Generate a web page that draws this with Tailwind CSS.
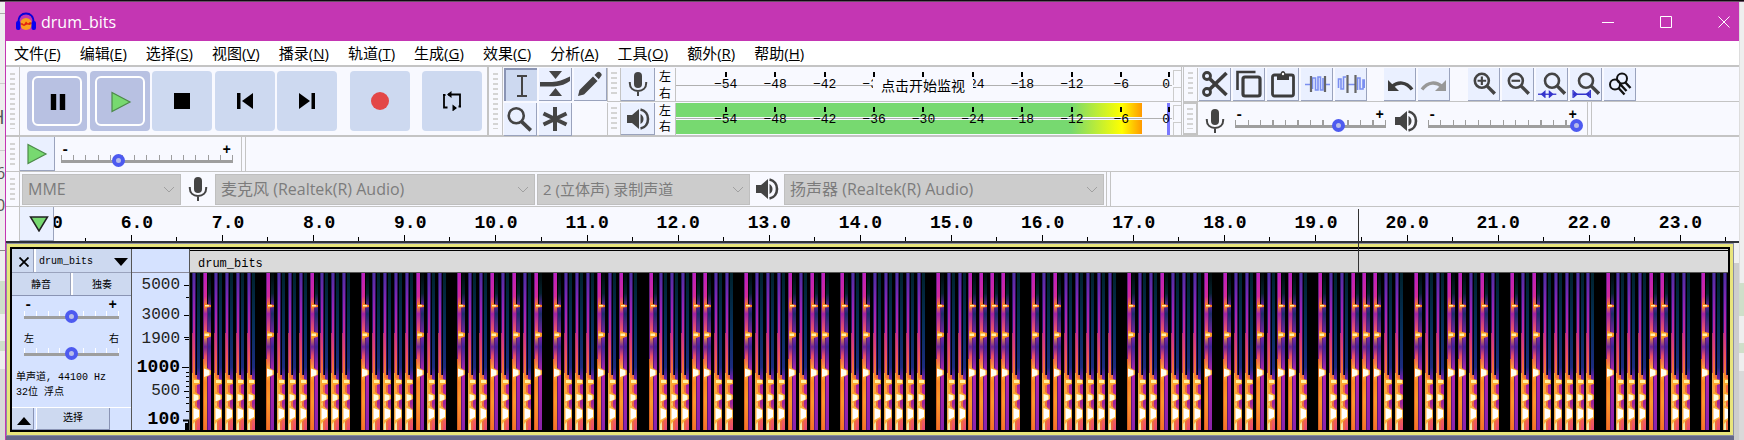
<!DOCTYPE html>
<html lang="zh-CN">
<head>
<meta charset="utf-8">
<title>drum_bits</title>
<script src="https://cdn.jsdelivr.net/npm/@tailwindcss/browser@4"></script>
</head>
<body class="bg-[#eeeeee] font-['Open_Sans','Noto_Sans_CJK_SC',sans-serif] text-black">
<svg class="hidden" aria-hidden="true">
  <symbol id="mic" viewBox="0 0 24 24"><rect x="8" y="0" width="8" height="16" rx="4" fill="#444"/><path d="M3.800 10v1c0 5 3.400 8 8.200 8s8.200-3 8.200-8v-1M12 19v5" fill="none" stroke="#444" stroke-width="2"/></symbol>
  <symbol id="speaker" viewBox="0 0 24 24"><path d="M1 8h5l7-6v20l-7-6H1z" fill="#444"/><path d="M14.500 7c4 2 4 8 0 10z" fill="#444"/><path d="M14.500 2.500c10 2 10 17 0 19" fill="none" stroke="#444" stroke-width="2.600"/></symbol>
  <symbol id="lens" viewBox="0 0 26 26"><circle cx="11" cy="10" r="6.500" fill="none" stroke="#444" stroke-width="2.400"/><path d="M16 15l7 7" stroke="#444" stroke-width="3.200"/></symbol>
  <symbol id="play" viewBox="0 0 22 22"><path d="M2 1.500L20 11 2 20.500z" fill="#77d970" stroke="#4c8a49" stroke-width="1.200"/></symbol>
</svg>

<div class="flex min-h-screen flex-col">
  <div class="h-0.5 bg-linear-to-b from-black to-[#9c7a98]"></div>
  <div class="flex flex-1">
    <!-- sliver of the desktop on the left -->
    <div class="flex w-1.5 flex-col overflow-hidden border-r border-[#c436b3] text-[#555]">
      <div class="h-3 border-b border-[#aaa]"></div>
      <div class="h-[70px] border-b border-[#ccc]"></div>
      <div class="flex h-[67px] flex-col justify-center border-b border-[#ccc]"><span class="-ml-2.5 text-xl leading-6">H</span></div>
      <div class="flex h-[100px] flex-col gap-2 border-b border-[#888] pt-2.5 text-base leading-6"><span class="-ml-1">6</span><span class="-ml-1">0</span></div>
      <div class="h-[30px]"></div>
      <div class="h-[33px] bg-[#cfdfc9]"></div>
      <div class="h-[27px]"></div>
      <div class="h-2.5 bg-[#cfdfc9]"></div>
      <div class="h-[18px]"></div>
      <div class="flex-1 bg-[#d9d9d9]"></div>
    </div>

    <div class="flex min-w-0 flex-1 flex-col bg-[#f8f9ff]">
      <header class="flex h-[39px] items-center bg-[#c436b3] pr-0 text-white">
        <svg class="ml-2.5 h-5 w-5" viewBox="0 0 20 20"><circle cx="10" cy="12" r="6" fill="#fb9d1f"/><path d="M4 12l2-1 2 1.500 2-3 2 2 2-1.500 2 1-2 2-3-.5-3 1.500-2-1z" fill="#e3210f"/><path d="M2.500 11C2 4 6 1.500 10 1.500S18 4 17.500 11" fill="none" stroke="#0a00d8" stroke-width="1.800"/><rect x="0" y="9" width="4.500" height="9" rx="2" fill="#0a00f0"/><rect x="15.500" y="9" width="4.500" height="9" rx="2" fill="#0a00f0"/></svg>
        <h1 class="ml-[5px] flex-1 text-base">drum_bits</h1>
        <button aria-label="最小化" class="flex w-[58px] justify-center"><svg class="h-3 w-3" viewBox="0 0 12 12" stroke="#fff"><path d="M0 6.500h12"/></svg></button>
        <button aria-label="最大化" class="flex w-[58px] justify-center"><svg class="h-3 w-3" viewBox="0 0 12 12" stroke="#fff" fill="none"><path d="M.5.5h11v11H.5z"/></svg></button>
        <button aria-label="关闭" class="-mr-3.5 flex w-[58px] justify-center"><svg class="h-3 w-3" viewBox="0 0 12 12" stroke="#fff"><path d="M.5.5l11 11M11.500.5l-11 11"/></svg></button>
      </header>

      <nav class="flex h-[26px] items-center gap-[19px] border-b-2 border-[#c4c4c4] bg-white pl-2 text-[15px] whitespace-nowrap">
        <button>文件(<u>F</u>)</button><button>编辑(<u>E</u>)</button><button>选择(<u>S</u>)</button><button>视图(<u>V</u>)</button><button>播录(<u>N</u>)</button><button>轨道(<u>T</u>)</button><button>生成(<u>G</u>)</button><button>效果(<u>C</u>)</button><button>分析(<u>A</u>)</button><button>工具(<u>O</u>)</button><button>额外(<u>R</u>)</button><button>帮助(<u>H</u>)</button>
      </nav>

      <!-- main tool dock -->
      <div class="flex h-[70px] border-b-2 border-[#c4c4c4]">
        <div class="flex border-r-2 border-[#c4c4c4] pr-[5px]">
          <div class="w-3.5 border-r border-[#c4c4c4] px-1 py-1.5"><div class="h-full bg-[repeating-linear-gradient(to_bottom,#d4d4d4_0_2px,transparent_2px_5px)]"></div></div>
          <div class="flex items-center pl-[7px]">
            <div class="flex w-[310px] justify-between">
              <button aria-label="暂停" class="flex size-[60px] items-center justify-center rounded bg-[#b8c1e2] p-[5px]"><span class="flex size-full items-center justify-center rounded-md border-2 border-white"><svg class="ml-0.5 mt-0.5 size-[18px]" viewBox="0 0 20 20"><path d="M2 1h6v18H2zM12 1h6v18h-6z"/></svg></span></button>
              <button aria-label="播放" class="flex size-[60px] items-center justify-center rounded bg-[#b8c1e2] p-[5px]"><span class="flex size-full items-center justify-center rounded-md border-2 border-white"><svg class="mt-0.5 ml-0.5 size-[22px]"><use href="#play"/></svg></span></button>
              <button aria-label="停止" class="flex size-[60px] items-center justify-center rounded bg-[#cdd9f0]"><span class="size-4 bg-black"></span></button>
              <button aria-label="跳到开头" class="flex size-[60px] items-center justify-center rounded bg-[#cdd9f0]"><svg class="size-[18px]" viewBox="0 0 18 18"><path d="M1 1h3.500v16H1zM17 1v16L6 9z"/></svg></button>
              <button aria-label="跳到结尾" class="flex size-[60px] items-center justify-center rounded bg-[#cdd9f0]"><svg class="size-[18px]" viewBox="0 0 18 18"><path d="M13.500 1H17v16h-3.500zM1 1v16l11-8z"/></svg></button>
            </div>
            <button aria-label="录制" class="ml-[13px] flex size-[60px] items-center justify-center rounded bg-[#cdd9f0]"><span class="size-[18px] rounded-full bg-[#e34747]"></span></button>
            <button aria-label="循环" class="ml-3 flex size-[60px] items-center justify-center rounded bg-[#cdd9f0]"><svg class="size-5" viewBox="0 0 20 20" fill="none" stroke="#000" stroke-width="1.800"><path d="M5.500 16.500H2V4M6 3.500h12V16M14 17H11"/><path d="M1 4h2.500M16.500 15.500H19"/><path d="M9.500 0L5 3.500l4.500 3.500zM10.500 13.500L15 17l-4.500 3.500z" fill="#000" stroke="none"/></svg></button>
          </div>
        </div>

        <div class="flex">
          <div class="w-3.5 border-r border-[#c4c4c4] px-1 py-1.5"><div class="h-full bg-[repeating-linear-gradient(to_bottom,#d4d4d4_0_2px,transparent_2px_5px)]"></div></div>
          <div class="grid grid-cols-3 content-start gap-0.5 pt-px pl-px">
            <button aria-label="选择工具" class="flex size-[33px] items-center justify-center border-t-2 border-l-2 border-[#8a94b4] bg-[#cdd9f0]"><svg class="h-[22px] w-3" viewBox="0 0 12 22" fill="none" stroke="#444" stroke-width="2"><path d="M1 1h10M1 21h10M6 1v20"/></svg></button>
            <button aria-label="包络工具" class="flex size-[33px] items-center justify-center border-r border-b border-[#9aa3bd] bg-[#eaf0ff]"><svg class="size-8" viewBox="0 0 32 32" fill="#444"><path d="M10 3h13l-6.500 8zM10 28h13l-6.500-8z"/><path d="M1 14h12c6-.5 11-2 18-5.500v4.500c-4 3-9 5-16 5.500H1z"/></svg></button>
            <button aria-label="绘制工具" class="flex size-[33px] items-center justify-center border-r border-b border-[#9aa3bd] bg-[#eaf0ff]"><svg class="size-7" viewBox="0 0 28 28" fill="#444"><path d="M2 26l1.500-6L17 6.500l4.500 4.500L8 24.500zM18.500 5l2.500-2.500c1-1 2.500-1 3.500.2 1.500 1.200 1.500 2.500.5 3.500L22.800 9.300z"/></svg></button>
            <button aria-label="缩放工具" class="flex size-[33px] items-center justify-center border-r border-b border-[#9aa3bd] bg-[#eaf0ff]"><svg class="size-7" viewBox="2 0 26 26"><circle cx="11.500" cy="10" r="7" fill="none" stroke="#444" stroke-width="2.400"/><path d="M16.500 15.500l8.500 8" stroke="#444" stroke-width="3.400"/></svg></button>
            <button aria-label="多功能工具" class="flex size-[33px] items-center justify-center border-r border-b border-[#9aa3bd] bg-[#eaf0ff]"><svg class="size-[26px]" viewBox="0 0 26 26" stroke="#444" stroke-width="4"><path d="M13 1v24M1.500 7.500l23 11M24.500 7.500l-23 11"/></svg></button>
          </div>
        </div>

        <!-- level meters -->
        <div class="flex flex-col border-r border-[#c4c4c4]">
          <div class="flex h-[35px] border-b border-[#c4c4c4] pt-px">
            <div class="w-3.5 border-x border-[#c4c4c4] px-[3px] py-1"><div class="h-full bg-[repeating-linear-gradient(to_bottom,#d4d4d4_0_2px,transparent_2px_5px)]"></div></div>
            <button aria-label="录制电平" class="flex w-[34px] items-center justify-center border-r border-b border-[#9aa3bd] bg-[#eaf0ff]"><svg class="size-6"><use href="#mic"/></svg></button>
            <div class="flex w-5 flex-col items-center text-xs leading-[17px]"><span>左</span><span>右</span></div>
            <div class="relative flex w-[497px] flex-col border-l border-[#c4c4c4]">
              <div class="h-[18px] border-b border-[#b0b0b0]"></div>
              <div class="absolute inset-0 flex pl-[25px] font-['Liberation_Mono',monospace] text-[13px] leading-3" data-scale></div>
              <span class="absolute top-[9px] left-[197px] bg-[#f8f9ff] px-2 font-['Noto_Sans_CJK_SC',sans-serif] text-sm leading-4">点击开始监视</span>
            </div>
            <div class="mt-0.5 ml-px flex w-2 flex-col gap-0.5"><div class="h-[15px] border-t border-l border-[#ccc]"></div><div class="flex-1 border-t border-l border-[#ccc]"></div></div>
          </div>
          <div class="flex h-[33px] pt-px">
            <div class="w-3.5 border-x border-[#c4c4c4] px-[3px] py-1"><div class="h-full bg-[repeating-linear-gradient(to_bottom,#d4d4d4_0_2px,transparent_2px_5px)]"></div></div>
            <button aria-label="播放电平" class="flex w-[34px] items-center justify-center border-r border-b border-[#9aa3bd] bg-[#eaf0ff]"><svg class="size-6"><use href="#speaker"/></svg></button>
            <div class="flex w-5 flex-col items-center text-xs leading-4"><span>左</span><span>右</span></div>
            <div class="relative flex w-[497px] flex-col border-l border-[#c4c4c4]">
              <div class="h-3.5 w-[466px] bg-[linear-gradient(to_right,#77d970_0_395px,#ffff00_446px,#ff9900_466px)]"></div>
              <div class="my-px h-px bg-[#b0b0b0]"></div>
              <div class="h-3.5 w-[466px] bg-[linear-gradient(to_right,#77d970_0_395px,#ffff00_446px,#ff9900_466px)]"></div>
              <div class="absolute inset-y-0 right-0.5 w-[3px] bg-[#7a78ff]"></div>
              <div class="absolute inset-0 flex pl-[25px] font-['Liberation_Mono',monospace] text-[13px] leading-3" data-scale></div>
            </div>
            <div class="mt-0.5 ml-px flex w-2 flex-col gap-0.5"><div class="h-[15px] border-t border-l border-[#ccc]"></div><div class="flex-1 border-t border-l border-[#ccc]"></div></div>
          </div>
        </div>

        <!-- edit and mixer bars -->
        <div class="ml-px flex flex-1 flex-col border-l border-[#c4c4c4]">
          <div class="flex h-[35px] border-b border-[#c4c4c4] pt-px">
            <div class="w-3.5 border-r border-[#c4c4c4] px-1 py-1"><div class="h-full bg-[repeating-linear-gradient(to_bottom,#d4d4d4_0_2px,transparent_2px_5px)]"></div></div>
            <div class="flex gap-0.5 pl-px">
              <button aria-label="剪切" class="flex w-8 items-center justify-center border-r border-b border-[#9aa3bd] bg-[#eaf0ff]"><svg class="size-7" viewBox="0 0 28 28" fill="none" stroke="#3c3c3c"><circle cx="6" cy="6" r="3.500" stroke-width="2.800"/><circle cx="6" cy="22" r="3.500" stroke-width="2.800"/><path d="M8.500 8.500L25.500 25" stroke-width="3.600"/><path d="M8.500 19.500L25.500 3" stroke-width="3.600"/></svg></button>
              <button aria-label="复制" class="flex w-8 items-center justify-center border-r border-b border-[#9aa3bd] bg-[#eaf0ff]"><svg class="size-7" viewBox="0 0 28 28" fill="none" stroke="#3c3c3c" stroke-width="2.600"><path d="M2.500 20V2h18"/><rect x="8" y="7" width="17" height="19" rx="2" stroke-width="3.200"/></svg></button>
              <button aria-label="粘贴" class="flex w-8 items-center justify-center border-r border-b border-[#9aa3bd] bg-[#eaf0ff]"><svg class="size-7" viewBox="0 0 28 28"><rect x="3.500" y="5" width="21" height="21" rx="2" fill="none" stroke="#3c3c3c" stroke-width="2.800"/><path d="M8 4h3.500c.5-4 4.500-4 5 0H20v6H8z" fill="#3c3c3c"/><circle cx="14" cy="4" r="1.200" fill="#fff"/></svg></button>
              <button aria-label="修剪" class="flex w-8 items-center justify-center border-r border-b border-[#9aa3bd] bg-[#eaf0ff]"><svg class="h-5 w-7" viewBox="0 0 28 20" fill="none" stroke="#7b8ff0" stroke-width="1.600"><path d="M2 10.500h5M23 10.500h4M9.500 15V4h3v12h2.500V3h2.500v13H20V4"/><path d="M8 2v16M22 2v16" stroke="#666" stroke-width="2.200"/></svg></button>
              <button aria-label="静音选区" class="flex w-8 items-center justify-center border-r border-b border-[#9aa3bd] bg-[#eaf0ff]"><svg class="h-5 w-7" viewBox="0 0 28 20" fill="none" stroke="#7b8ff0" stroke-width="1.600"><path d="M1.500 14V5H4v10h2.500V3H9M11 10.500h7M20.500 16V4H23v11h3V6h1.500v8"/><path d="M10.500 1v18M18.500 1v18" stroke="#666" stroke-width="2.200"/></svg></button>
            </div>
            <div class="flex gap-0.5 pl-[17px]">
              <button aria-label="撤销" class="flex w-8 items-center justify-center border-r border-b border-[#9aa3bd] bg-[#eaf0ff]"><svg class="mt-1 h-4 w-7" viewBox="0 0 28 16"><path d="M6 8.500C12 3.500 20 3.500 26 11.500" fill="none" stroke="#3c3c3c" stroke-width="3.400"/><path d="M2 2v11h11z" fill="#3c3c3c"/></svg></button>
              <button aria-label="重做" class="flex w-8 items-center justify-center border-r border-b border-[#9aa3bd] bg-[#eaf0ff]"><svg class="mt-1 h-4 w-7" viewBox="0 0 28 16"><path d="M22 8.500C16 3.500 8 3.500 2 11.500" fill="none" stroke="#989898" stroke-width="3.400"/><path d="M26 2v11H15z" fill="#989898"/></svg></button>
            </div>
            <div class="flex gap-0.5 pl-[18px]">
              <button aria-label="放大" class="flex w-8 items-center justify-center border-r border-b border-[#9aa3bd] bg-[#eaf0ff]"><svg class="size-7" viewBox="0 0 26 26"><use href="#lens"/><path d="M7 10h8M11 6v8" stroke="#444" stroke-width="2"/></svg></button>
              <button aria-label="缩小" class="flex w-8 items-center justify-center border-r border-b border-[#9aa3bd] bg-[#eaf0ff]"><svg class="size-7" viewBox="0 0 26 26"><use href="#lens"/><path d="M7 10h8" stroke="#444" stroke-width="2"/></svg></button>
              <button aria-label="适应选区" class="flex w-8 items-center justify-center border-r border-b border-[#9aa3bd] bg-[#eaf0ff]"><svg class="size-7" viewBox="0 0 26 26"><use href="#lens" x="2"/><path d="M0 22.500h17" stroke="#3333cc" stroke-width="1.200"/><path d="M7 18.500v8l-4.500-4zM10 18.500v8l4.500-4z" fill="#3333cc"/></svg></button>
              <button aria-label="适应项目" class="flex w-8 items-center justify-center border-r border-b border-[#9aa3bd] bg-[#eaf0ff]"><svg class="size-7" viewBox="0 0 26 26"><use href="#lens" x="2"/><path d="M1 22.500h16M1 18.500v8M17 18.500v8" stroke="#3333cc" stroke-width="1.200"/><path d="M1.500 19v7l4-3.500zM16.500 19v7l-4-3.500z" fill="#3333cc"/></svg></button>
              <button aria-label="缩放切换" class="flex w-8 items-center justify-center border-r border-b border-[#9aa3bd] bg-[#eaf0ff]"><svg class="size-6" viewBox="0 0 24 24" fill="none" stroke="#111" stroke-width="2"><circle cx="14" cy="6.500" r="5"/><circle cx="7" cy="12.500" r="5"/><path d="M17 10l5.500 6M10.500 16l6 6.500M12 12l6.500 7" stroke-width="2.400"/></svg></button>
            </div>
          </div>
          <div class="flex h-[33px]">
            <div class="w-3.5 border-2 border-l-0 border-[#c4c4c4] px-[3px] py-1"><div class="h-full bg-[repeating-linear-gradient(to_bottom,#d4d4d4_0_2px,transparent_2px_5px)]"></div></div>
            <div class="flex flex-1 items-center">
              <svg class="mt-1 mr-2 ml-[5px] size-6"><use href="#mic"/></svg>
              <div class="relative w-[151px] text-black">
                <div class="flex justify-between font-['Liberation_Mono',monospace] text-sm leading-[10px] font-bold"><span>-</span><span class="pr-0.5">+</span></div>
                <div class="h-[5px] bg-[repeating-linear-gradient(to_right,#9e9e9e_0_1px,transparent_1px_calc((100%_-_1px)/12))]"></div>
                <div class="h-[3px] bg-[#9e9e9e]"></div>
                <input type="range" aria-label="录制音量" value="70" class="absolute inset-x-0 -bottom-1 h-[13px] w-full appearance-none bg-transparent [&::-webkit-slider-thumb]:size-[13px] [&::-webkit-slider-thumb]:appearance-none [&::-webkit-slider-thumb]:rounded-full [&::-webkit-slider-thumb]:border-4 [&::-webkit-slider-thumb]:border-[#4d5af0] [&::-webkit-slider-thumb]:bg-[#b8bde8]">
              </div>
              <svg class="mt-1 mr-2.5 ml-2 size-6"><use href="#speaker"/></svg>
              <div class="relative w-[151px] text-black">
                <div class="flex justify-between font-['Liberation_Mono',monospace] text-sm leading-[10px] font-bold"><span>-</span><span class="pr-0.5">+</span></div>
                <div class="h-[5px] bg-[repeating-linear-gradient(to_right,#9e9e9e_0_1px,transparent_1px_calc((100%_-_1px)/12))]"></div>
                <div class="h-[3px] bg-[#9e9e9e]"></div>
                <input type="range" aria-label="播放音量" value="100" class="absolute -right-1 -bottom-1 left-0 h-[13px] w-[155px] appearance-none bg-transparent [&::-webkit-slider-thumb]:size-[13px] [&::-webkit-slider-thumb]:appearance-none [&::-webkit-slider-thumb]:rounded-full [&::-webkit-slider-thumb]:border-4 [&::-webkit-slider-thumb]:border-[#4d5af0] [&::-webkit-slider-thumb]:bg-[#b8bde8]">
              </div>
              <div class="ml-2 h-full w-[5px] border-x border-[#c4c4c4]"></div>
            </div>
          </div>
        </div>
      </div>

      <!-- play-at-speed bar -->
      <div class="flex h-[35px] border-b border-[#c4c4c4]">
        <div class="w-3.5 border-r border-[#c4c4c4] px-1 py-1.5"><div class="h-full bg-[repeating-linear-gradient(to_bottom,#d4d4d4_0_2px,transparent_2px_5px)]"></div></div>
        <button aria-label="变速播放" class="flex w-[35px] items-center justify-center border-r border-b border-[#9aa3bd] bg-[#eaf0ff]"><svg class="size-[22px]"><use href="#play"/></svg></button>
        <div class="flex items-center pl-1.5">
          <div class="relative w-[172px]">
            <div class="flex justify-between font-['Liberation_Mono',monospace] text-sm leading-[10px] font-bold"><span>-</span><span class="pr-0.5">+</span></div>
            <div class="h-[5px] bg-[repeating-linear-gradient(to_right,#9e9e9e_0_1px,transparent_1px_calc((100%_-_1px)/14))]"></div>
            <div class="h-[3px] bg-[#9e9e9e]"></div>
            <input type="range" aria-label="播放速度" value="32" class="absolute inset-x-0 -bottom-1 h-[13px] w-full appearance-none bg-transparent [&::-webkit-slider-thumb]:size-[13px] [&::-webkit-slider-thumb]:appearance-none [&::-webkit-slider-thumb]:rounded-full [&::-webkit-slider-thumb]:border-4 [&::-webkit-slider-thumb]:border-[#4d5af0] [&::-webkit-slider-thumb]:bg-[#b8bde8]">
          </div>
        </div>
        <div class="ml-2 w-[5px] border-x border-[#c4c4c4]"></div>
      </div>

      <!-- device bar -->
      <div class="flex h-[35px] border-b border-[#c4c4c4] text-base text-[#7c7c7c]">
        <div class="w-3.5 border-r border-[#c4c4c4] px-1 py-1.5"><div class="h-full bg-[repeating-linear-gradient(to_bottom,#d4d4d4_0_2px,transparent_2px_5px)]"></div></div>
        <div class="flex items-center pl-0.5">
          <div class="relative"><select disabled aria-label="音频主机" class="h-[31px] w-[159px] appearance-none border border-[#bfbfbf] bg-[#cccccc] px-[5px] text-base leading-6"><option>MME</option></select><svg class="absolute top-3 right-1.5 h-2 w-3" viewBox="0 0 12 8" fill="none" stroke="#a0a0a0"><path d="M1 1l5 5 5-5"/></svg></div>
          <svg class="mx-[5px] size-6"><use href="#mic"/></svg>
          <div class="relative"><select disabled aria-label="录制设备" class="h-[31px] w-80 appearance-none border border-[#bfbfbf] bg-[#cccccc] px-[5px] text-base leading-6"><option>麦克风 (Realtek(R) Audio)</option></select><svg class="absolute top-3 right-1.5 h-2 w-3" viewBox="0 0 12 8" fill="none" stroke="#a0a0a0"><path d="M1 1l5 5 5-5"/></svg></div>
          <div class="relative ml-0.5"><select disabled aria-label="录制声道" class="h-[31px] w-[213px] appearance-none border border-[#bfbfbf] bg-[#cccccc] px-[5px] text-[15px] leading-6"><option>2 (立体声) 录制声道</option></select><svg class="absolute top-3 right-1.5 h-2 w-3" viewBox="0 0 12 8" fill="none" stroke="#a0a0a0"><path d="M1 1l5 5 5-5"/></svg></div>
          <svg class="mx-[5px] size-6"><use href="#speaker"/></svg>
          <div class="relative"><select disabled aria-label="播放设备" class="h-[31px] w-80 appearance-none border border-[#bfbfbf] bg-[#cccccc] px-[5px] text-base leading-6"><option>扬声器 (Realtek(R) Audio)</option></select><svg class="absolute top-3 right-1.5 h-2 w-3" viewBox="0 0 12 8" fill="none" stroke="#a0a0a0"><path d="M1 1l5 5 5-5"/></svg></div>
        </div>
        <div class="ml-0.5 w-[5px] border-x border-[#c4c4c4]"></div>
      </div>

      <!-- timeline ruler -->
      <div class="relative flex h-9 border-b-2 border-[#2e3138] pr-[13px] font-['Liberation_Mono',monospace] text-lg font-bold">
        <div class="w-3.5 border-r border-[#c4c4c4]"></div>
        <button aria-label="时间轴选项" class="flex w-[34px] items-center justify-center border-r border-b border-[#9aa3bd] bg-[#eaf0ff]"><svg class="ml-1 h-4 w-5" viewBox="0 0 20 16"><path d="M1.500 1h17L10 15z" fill="#77d970" stroke="#222" stroke-width="1.500"/></svg></button>
        <div class="flex w-8 items-end overflow-hidden border-r border-black [border-image:linear-gradient(transparent_88%,#000_88%)_1]"><span class="-ml-0.5 pb-1">0</span></div>
        <div id="timeline" class="grid flex-1 grid-cols-18"></div>
        <div class="absolute top-0.5 left-[1352px] z-10 h-[64px] w-px bg-[#333]"></div>
      </div>

      <!-- track area -->
      <div class="flex flex-1 bg-[#646889]">
        <section class="mb-[5px] flex min-w-0 flex-1 flex-col border border-[#8a8ca0] bg-[#e9e57c] p-[3px]">
          <div class="flex flex-1 border-2 border-black">
            <div class="flex w-[120px] flex-col border-r border-[#555] bg-[#d5e2ff] font-['Liberation_Mono','Noto_Sans_CJK_SC',monospace] text-[10px]">
              <div class="flex h-6 gap-0.5 border-b border-[#9aa3bd] bg-white">
                <button aria-label="关闭轨道" class="flex w-[22px] items-center justify-center border-r border-[#9aa3bd] bg-[#cdd9f0]"><svg class="mt-0.5 ml-0.5 size-2.5" viewBox="0 0 10 10" stroke="#000" stroke-width="1.800"><path d="M.5.500l9 9M9.500.500l-9 9"/></svg></button>
                <button class="flex flex-1 items-center justify-between bg-[#cdd9f0] px-[3px] pt-0.5">drum_bits<svg class="h-2 w-3.5" viewBox="0 0 14 8"><path d="M0 0h14L7 8z"/></svg></button>
              </div>
              <div class="flex h-[23px] gap-0.5 border-b border-[#8a94b4] bg-white">
                <button class="flex-1 border-r border-[#9aa3bd] bg-[#cdd9f0] pt-0.5">静音</button>
                <button class="flex-1 bg-[#cdd9f0] pt-0.5">独奏</button>
              </div>
              <div class="relative mx-3 mt-1">
                <div class="flex justify-between text-sm leading-[11px] font-bold"><span>-</span><span class="pr-0.5">+</span></div>
                <div class="h-[5px] bg-[repeating-linear-gradient(to_right,#fff_0_1px,transparent_1px_calc((100%_-_1px)/8))]"></div>
                <div class="h-[3px] bg-[#9e9e9e]"></div>
                <input type="range" aria-label="增益" value="50" class="absolute inset-x-0 -bottom-1 h-[13px] w-full appearance-none bg-transparent [&::-webkit-slider-thumb]:size-[13px] [&::-webkit-slider-thumb]:appearance-none [&::-webkit-slider-thumb]:rounded-full [&::-webkit-slider-thumb]:border-4 [&::-webkit-slider-thumb]:border-[#4d5af0] [&::-webkit-slider-thumb]:bg-[#b8bde8]">
              </div>
              <div class="relative mx-3 mt-[15px]">
                <div class="flex justify-between leading-3"><span>左</span><span>右</span></div>
                <div class="mt-0.5 h-[5px] bg-[repeating-linear-gradient(to_right,#fff_0_1px,transparent_1px_calc((100%_-_1px)/8))]"></div>
                <div class="h-[3px] bg-[#9e9e9e]"></div>
                <input type="range" aria-label="声像" value="50" class="absolute inset-x-0 -bottom-1 h-[13px] w-full appearance-none bg-transparent [&::-webkit-slider-thumb]:size-[13px] [&::-webkit-slider-thumb]:appearance-none [&::-webkit-slider-thumb]:rounded-full [&::-webkit-slider-thumb]:border-4 [&::-webkit-slider-thumb]:border-[#4d5af0] [&::-webkit-slider-thumb]:bg-[#b8bde8]">
              </div>
              <p class="mt-3.5 pl-1 leading-[15px] whitespace-nowrap">单声道, 44100 Hz<br>32位 浮点</p>
              <div class="mt-auto flex h-[23px] gap-0.5 border-t border-white">
                <button aria-label="折叠" class="flex w-[22px] items-center justify-center border-r border-b border-[#8a94b4] bg-[#cdd9f0]"><svg class="mt-1 ml-0.5 h-2 w-3.5" viewBox="0 0 14 8"><path d="M0 8h14L7 0z"/></svg></button>
                <button class="w-[74px] border-r border-b border-l border-[#8a94b4] border-l-white bg-[#cdd9f0]">选择</button>
              </div>
            </div>
            <!-- frequency scale -->
            <div class="flex w-[58px] flex-col border-r border-[#555] bg-[#d5e2ff]">
              <div class="h-6 border-b border-[#8a8a9a]"></div>
              <div class="flex flex-1 justify-end font-['Liberation_Mono',monospace] text-base leading-4">
                <div class="flex flex-col items-end pt-1 text-[#222]">
                  <span>5000</span><span class="mt-3.5">3000</span><span class="mt-2">1900</span><span class="mt-3 text-lg leading-4 font-bold text-black">1000</span><span class="mt-2">500</span><span class="mt-3 text-lg leading-4 font-bold text-black">100</span>
                </div>
                <svg class="ml-0.5 h-[157px] w-[7px]" viewBox="0 0 7 157" stroke="#000"><path d="M2 12.500h5M4 24.500h3M2 42.500h5M2 64.500h5M3 66.500h4M0 94.500h7M4 99.500h3M4 103.500h3M4 108.500h3M4 113.500h3M2 118.500h5M4 124.500h3M4 130.500h3M4 138.500h3"/><path d="M1 147.500h6v9" fill="none" stroke-width="2"/><path d="M5 150v7" stroke-width="4"/></svg>
              </div>
            </div>
            <div class="flex min-w-0 flex-1 flex-col bg-black">
              <div class="h-px bg-[#dadada]"></div>
              <div class="mt-px flex h-[21px] items-end bg-[#dadada] pl-2 font-['Liberation_Mono',monospace] text-xs">drum_bits</div>
              <div class="h-px bg-[#555]"></div>
              <div class="h-[157px] overflow-hidden">
                <svg id="spectrogram" class="h-full w-full" role="img" aria-label="频谱图">
                  <defs>
                    <linearGradient id="loBody" x2="0" y2="1"><stop offset="0" stop-color="#4a2fa0"/><stop offset=".22" stop-color="#9a22b4"/><stop offset=".38" stop-color="#c92a9c"/><stop offset=".52" stop-color="#f0505a"/><stop offset=".66" stop-color="#fb8526"/><stop offset=".8" stop-color="#f7c04a"/><stop offset="1" stop-color="#f4f0b8"/></linearGradient>
                    <linearGradient id="loTail" x2="0" y2="1"><stop offset="0" stop-color="#00222c"/><stop offset=".35" stop-color="#06305c"/><stop offset=".6" stop-color="#1c2c80"/><stop offset=".68" stop-color="#7a1fac"/><stop offset=".75" stop-color="#b82398"/><stop offset=".83" stop-color="#9a249c"/><stop offset=".92" stop-color="#f4664c"/><stop offset="1" stop-color="#e64878"/></linearGradient>
                    <linearGradient id="hiBody" x2="0" y2="1"><stop offset="0" stop-color="#b81fc0"/><stop offset=".15" stop-color="#d62a98"/><stop offset=".21" stop-color="#fb8a22"/><stop offset=".26" stop-color="#a023a8"/><stop offset=".36" stop-color="#ef5565"/><stop offset=".4" stop-color="#fda030"/><stop offset=".47" stop-color="#6c239c"/><stop offset=".53" stop-color="#f04f62"/><stop offset=".62" stop-color="#fcae3a"/><stop offset=".7" stop-color="#fb8a24"/><stop offset=".82" stop-color="#fb9a2a"/><stop offset="1" stop-color="#f8702c"/></linearGradient>
                    <linearGradient id="hiTail" x2="0" y2="1"><stop offset="0" stop-color="#000a0c"/><stop offset=".13" stop-color="#04222e"/><stop offset=".21" stop-color="#5a209c"/><stop offset=".26" stop-color="#1c2d6a"/><stop offset=".4" stop-color="#8424a8"/><stop offset=".47" stop-color="#3c2494"/><stop offset=".63" stop-color="#b224ac"/><stop offset="1" stop-color="#8a24ac"/></linearGradient>
                    <g id="lo">
                      <path d="M0 0h1v157H0z" fill="#2a1c6c"/><path d="M0 60h1v97H0z" fill="#a8386c"/><path d="M0 100h1v57H0z" fill="#f0a848"/>
                      <path d="M1 0h2v157H1z" fill="url(#loBody)"/>
                      <path d="M3 0h1v102H3z" fill="#2a1560"/>
                      <path d="M3 102h2v55H3z" fill="#f06a40"/>
                      <path d="M5 0h3v157H5z" fill="url(#loTail)"/>
                      <path d="M1 105l7 2v4l-7 2z" fill="#fba62c"/><path d="M2 107h5v3H2z" fill="#fff0a0"/>
                      <path d="M1 118l3.500 2 3.500 2v4l-3.500 2-3.500 2z" fill="#fba62c"/><path d="M1.500 121l5 1.500v4l-5 2z" fill="#fffde0"/>
                      <path d="M1 132l3.500 2 3.500 3v8l-3.500 2-3.500 4z" fill="#fbb43c"/><path d="M1.500 135l5.500 2v7l-5.500 3z" fill="#fff"/>
                    </g>
                    <g id="hi">
                      <path d="M0 0h1v157H0z" fill="#6a1c80"/><path d="M0 86h1v71H0z" fill="#d8641c"/>
                      <path d="M1 0h3v157H1z" fill="url(#hiBody)"/>
                      <path d="M4 32h1v125H4z" fill="#5a1878"/>
                      <path d="M5 0h3v157H5z" fill="url(#hiTail)"/>
                      <path d="M1 30.500l7 1.500v2L1 35z" fill="#fb7a22"/><path d="M2 32h4v1.500H2z" fill="#fff3a0"/>
                      <path d="M1 58l7 2v3.500L1 66z" fill="#fb9a22"/><path d="M1.500 60.500H6V63H1.500z" fill="#fff3b0"/>
                      <path d="M1 92l3.500 3.500L8 97.500v4l-3.500 2L1 107z" fill="#fba832"/><path d="M1 95.500l5.500 2v4.500L1 104z" fill="#fffef0"/>
                    </g>
                  </defs>
                </svg>
              </div>
            </div>
          </div>
        </section>
        <div class="flex w-[5px] flex-col bg-[#cdcdcd]"><div class="h-5 bg-[#f0f0f0]"></div></div>
      </div>
    </div>

    <!-- sliver of the desktop on the right -->
    <div class="flex w-[5px] flex-col">
      <div class="h-[281px] border-l border-[#ddd]"></div>
      <div class="h-[33px] bg-[#cfdfc9]"></div>
      <div class="h-[27px]"></div>
      <div class="h-2.5 bg-[#cfdfc9]"></div>
      <div class="h-[18px]"></div>
      <div class="flex-1 bg-[#d9d9d9]"></div>
    </div>
  </div>
</div>

<script>
  // dB scale shared by both meters
  document.querySelectorAll('[data-scale]').forEach(el => {
    const cell = t => `<div class="flex w-full flex-col items-center pt-1"><i class="h-[5px] w-0.5 bg-black"></i><span class="pt-0.5">${t}</span></div>`;
    const marks = ['-54', '-48', '-42', '-36', '-30', '-24', '-18', '-12', '-6'];
    el.innerHTML = `<div class="grid w-[445px] grid-cols-9">${marks.map(m => cell(m.replace('-', '−'))).join('')}</div>` +
      '<div class="flex w-6 flex-col items-end pt-1"><i class="h-[5px] w-0.5 bg-black"></i><span class="pt-0.5">0</span></div>';
  });

  // one cell per second, major tick in the middle and half-second tick at its right edge
  let cells = '';
  for (let s = 6; s <= 23; s++) {
    cells += `<div class="flex items-end"><span class="flex flex-1 flex-col items-center"><span class="leading-6 whitespace-pre">${(s + '.0').padStart(4)}</span><i class="h-[6px] w-px bg-black"></i></span><i class="-ml-px h-1 w-px bg-black"></i></div>`;
  }
  document.getElementById('timeline').innerHTML = cells;

  // drum hits: eight per bar, 1 = bright hit, 0 = dull hit
  const bars = ['00010000', '10001000', '10000100', '10010101', '10001010', '10001100', '10001011', '10100000', '10011110', '10100000', '10010001', '10010110', '10011100', '10011010', '10100000', '10001100', '10010110'];
  const svg = document.getElementById('spectrogram');
  bars.forEach((bar, b) => [...bar].forEach((hit, i) => {
    const use = document.createElementNS('http://www.w3.org/2000/svg', 'use');
    use.setAttribute('href', hit === '1' ? '#hi' : '#lo');
    use.setAttribute('x', Math.round(-20 + b * 95.7 + i * 10.95));
    svg.appendChild(use);
  }));
</script>
</body>
</html>
